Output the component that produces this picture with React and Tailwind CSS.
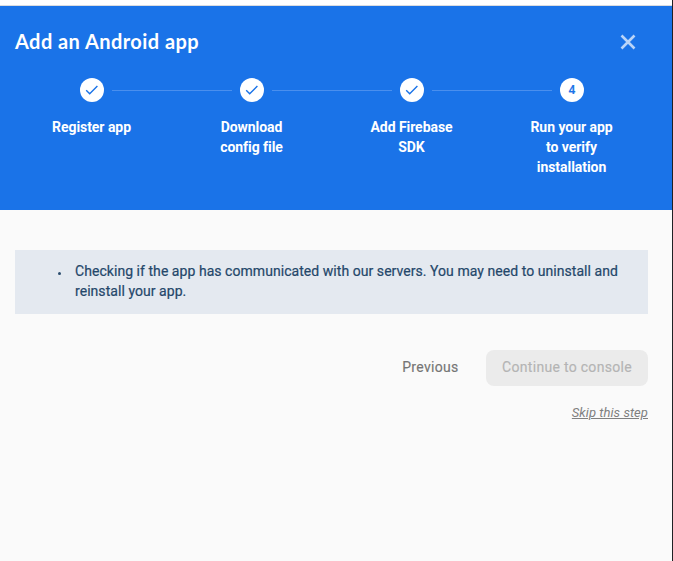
const steps = [
  ['Register app'],
  ['Download', 'config file'],
  ['Add Firebase', 'SDK'],
  ['Run your app', 'to verify', 'installation'],
];

function Step({ lines, index }) {
  const last = index === steps.length - 1;
  return (
    <div className="w-40">
      <div className="flex h-6 items-center">
        <div className={`h-px w-[60px] ${index === 0 ? '' : 'bg-[#4a8fee]'}`} />
        <div className="mx-2 flex size-6 items-center justify-center rounded-full bg-white text-[12px] font-medium text-[#1a73e8] [-webkit-text-stroke:0.2px]">
          {last ? '4' : (
            <svg width="24" height="24" viewBox="0 0 24 24" fill="none" stroke="#1a73e8" strokeWidth="1.4">
              <path d="M6.2 12.2l3.5 3.5L17.4 8" />
            </svg>
          )}
        </div>
        <div className={`h-px w-[60px] ${last ? '' : 'bg-[#4a8fee]'}`} />
      </div>
      <div className="mt-[15px] pr-px text-center text-[14px] leading-5 font-bold tracking-[-0.05px] text-white">
        {lines.map((line) => <div key={line}>{line}</div>)}
      </div>
    </div>
  );
}

export default function App() {
  return (
    <div className="h-[561px] w-[673px] overflow-hidden border-r border-[#202124] bg-[#fafafa] font-['Roboto',sans-serif]">
      <div className="h-[6px] border-b border-[#dadce0] bg-white" />
      <header className="h-[204px] bg-[#1a73e8] pt-[19px]">
        <div className="flex h-8 items-center justify-between pr-9 pl-[15px]">
          <h1 className="font-['Lato',sans-serif] text-[20px] leading-8 font-bold tracking-[0.44px] text-white">Add an Android app</h1>
          <svg className="mt-[2px]" width="16" height="16" viewBox="0 0 16 16" stroke="#b9d4f8" strokeWidth="2.6">
            <path d="M1.5 1.5l13 13M14.5 1.5l-13 13" />
          </svg>
        </div>
        <div className="mt-[21px] ml-[12px] flex">
          {steps.map((lines, i) => <Step key={i} lines={lines} index={i} />)}
        </div>
      </header>
      <main className="pt-10 pr-6 pl-[15px]">
        <div className="flex h-16 bg-[#e4e9f0] pt-[11px] text-[14px] leading-5 text-[#24476a] [-webkit-text-stroke:0.2px]">
          <div className="mt-[11px] ml-[43px] size-[3px] rounded-full bg-[#2b4d6e]" />
          <div className="ml-[14px] tracking-[0.05px] whitespace-nowrap">
            <div>Checking if the app has communicated with our servers. You may need to uninstall and</div>
            <div>reinstall your app.</div>
          </div>
        </div>
        <div className="mt-9 flex h-9 items-center justify-end text-[14px] leading-5 [-webkit-text-stroke:0.15px]">
          <button className="mr-[27.5px] h-9 pb-[2px] tracking-[0.3px] text-[#757575]">Previous</button>
          <button className="h-9 w-[162px] rounded-lg bg-[#ebebeb] pb-[2px] tracking-[0.3px] text-[#b4b4b4]">Continue to console</button>
        </div>
        <div className="mt-[17px] text-right text-[13px] leading-5 tracking-[0.05px] text-[#808080] italic underline">Skip this step</div>
      </main>
    </div>
  );
}
